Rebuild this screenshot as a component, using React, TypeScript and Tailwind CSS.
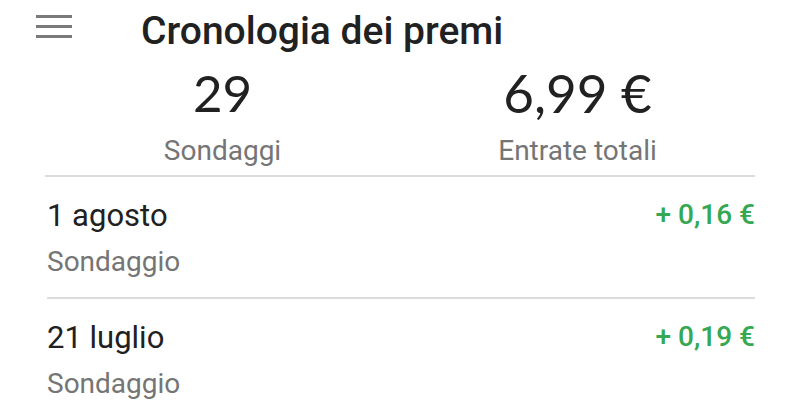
import React from "react";

function Row({ date, amount }: { date: string; amount: string }) {
  return (
    <div className="flex justify-between h-[122px] border-b-2 border-[#dcdcdc] pt-[21px]">
      <div className="flex flex-col">
        <div className="text-[31px] leading-[36px] text-[#212121]">{date}</div>
        <div className="text-[28px] leading-[32px] text-[#757575] mt-[12px]">Sondaggio</div>
      </div>
      <div className="text-[28px] leading-[32px] font-medium text-[#34a853] mt-[1px]">{amount}</div>
    </div>
  );
}

export default function App() {
  return (
    <div className="w-[800px] h-[407px] overflow-hidden bg-white" style={{ fontFamily: "Roboto, 'Noto Sans', sans-serif" }}>
      <div className="flex items-center h-[62px] pl-[36px]">
        <svg width="36" height="26" viewBox="0 0 36 26" className="mt-[-8px]">
          <rect x="0" y="1" width="36" height="3" fill="#7a7a7a" />
          <rect x="0" y="11" width="36" height="3" fill="#7a7a7a" />
          <rect x="0" y="21" width="36" height="3" fill="#7a7a7a" />
        </svg>
        <div className="ml-[69px] text-[39px] leading-[44px] font-medium text-[#212121] mt-[-1px]">Cronologia dei premi</div>
      </div>
      <div className="mx-[45px] flex border-b-2 border-[#dcdcdc] h-[115px]">
        <div className="flex-1 flex flex-col items-center">
          <div className="text-[51px] leading-[60px] text-[#212121] mt-[1px]" style={{ fontFamily: "Lato, sans-serif" }}>29</div>
          <div className="text-[28px] leading-[32px] text-[#757575] mt-[12px]">Sondaggi</div>
        </div>
        <div className="flex-1 flex flex-col items-center">
          <div className="text-[53px] leading-[60px] text-[#212121] mt-[1px]" style={{ fontFamily: "Lato, sans-serif" }}>6,99 €</div>
          <div className="text-[28px] leading-[32px] text-[#757575] mt-[12px]">Entrate totali</div>
        </div>
      </div>
      <div className="mx-[45px] pl-[2px]">
        <Row date="1 agosto" amount="+ 0,16 €" />
        <Row date="21 luglio" amount="+ 0,19 €" />
      </div>
    </div>
  );
}
